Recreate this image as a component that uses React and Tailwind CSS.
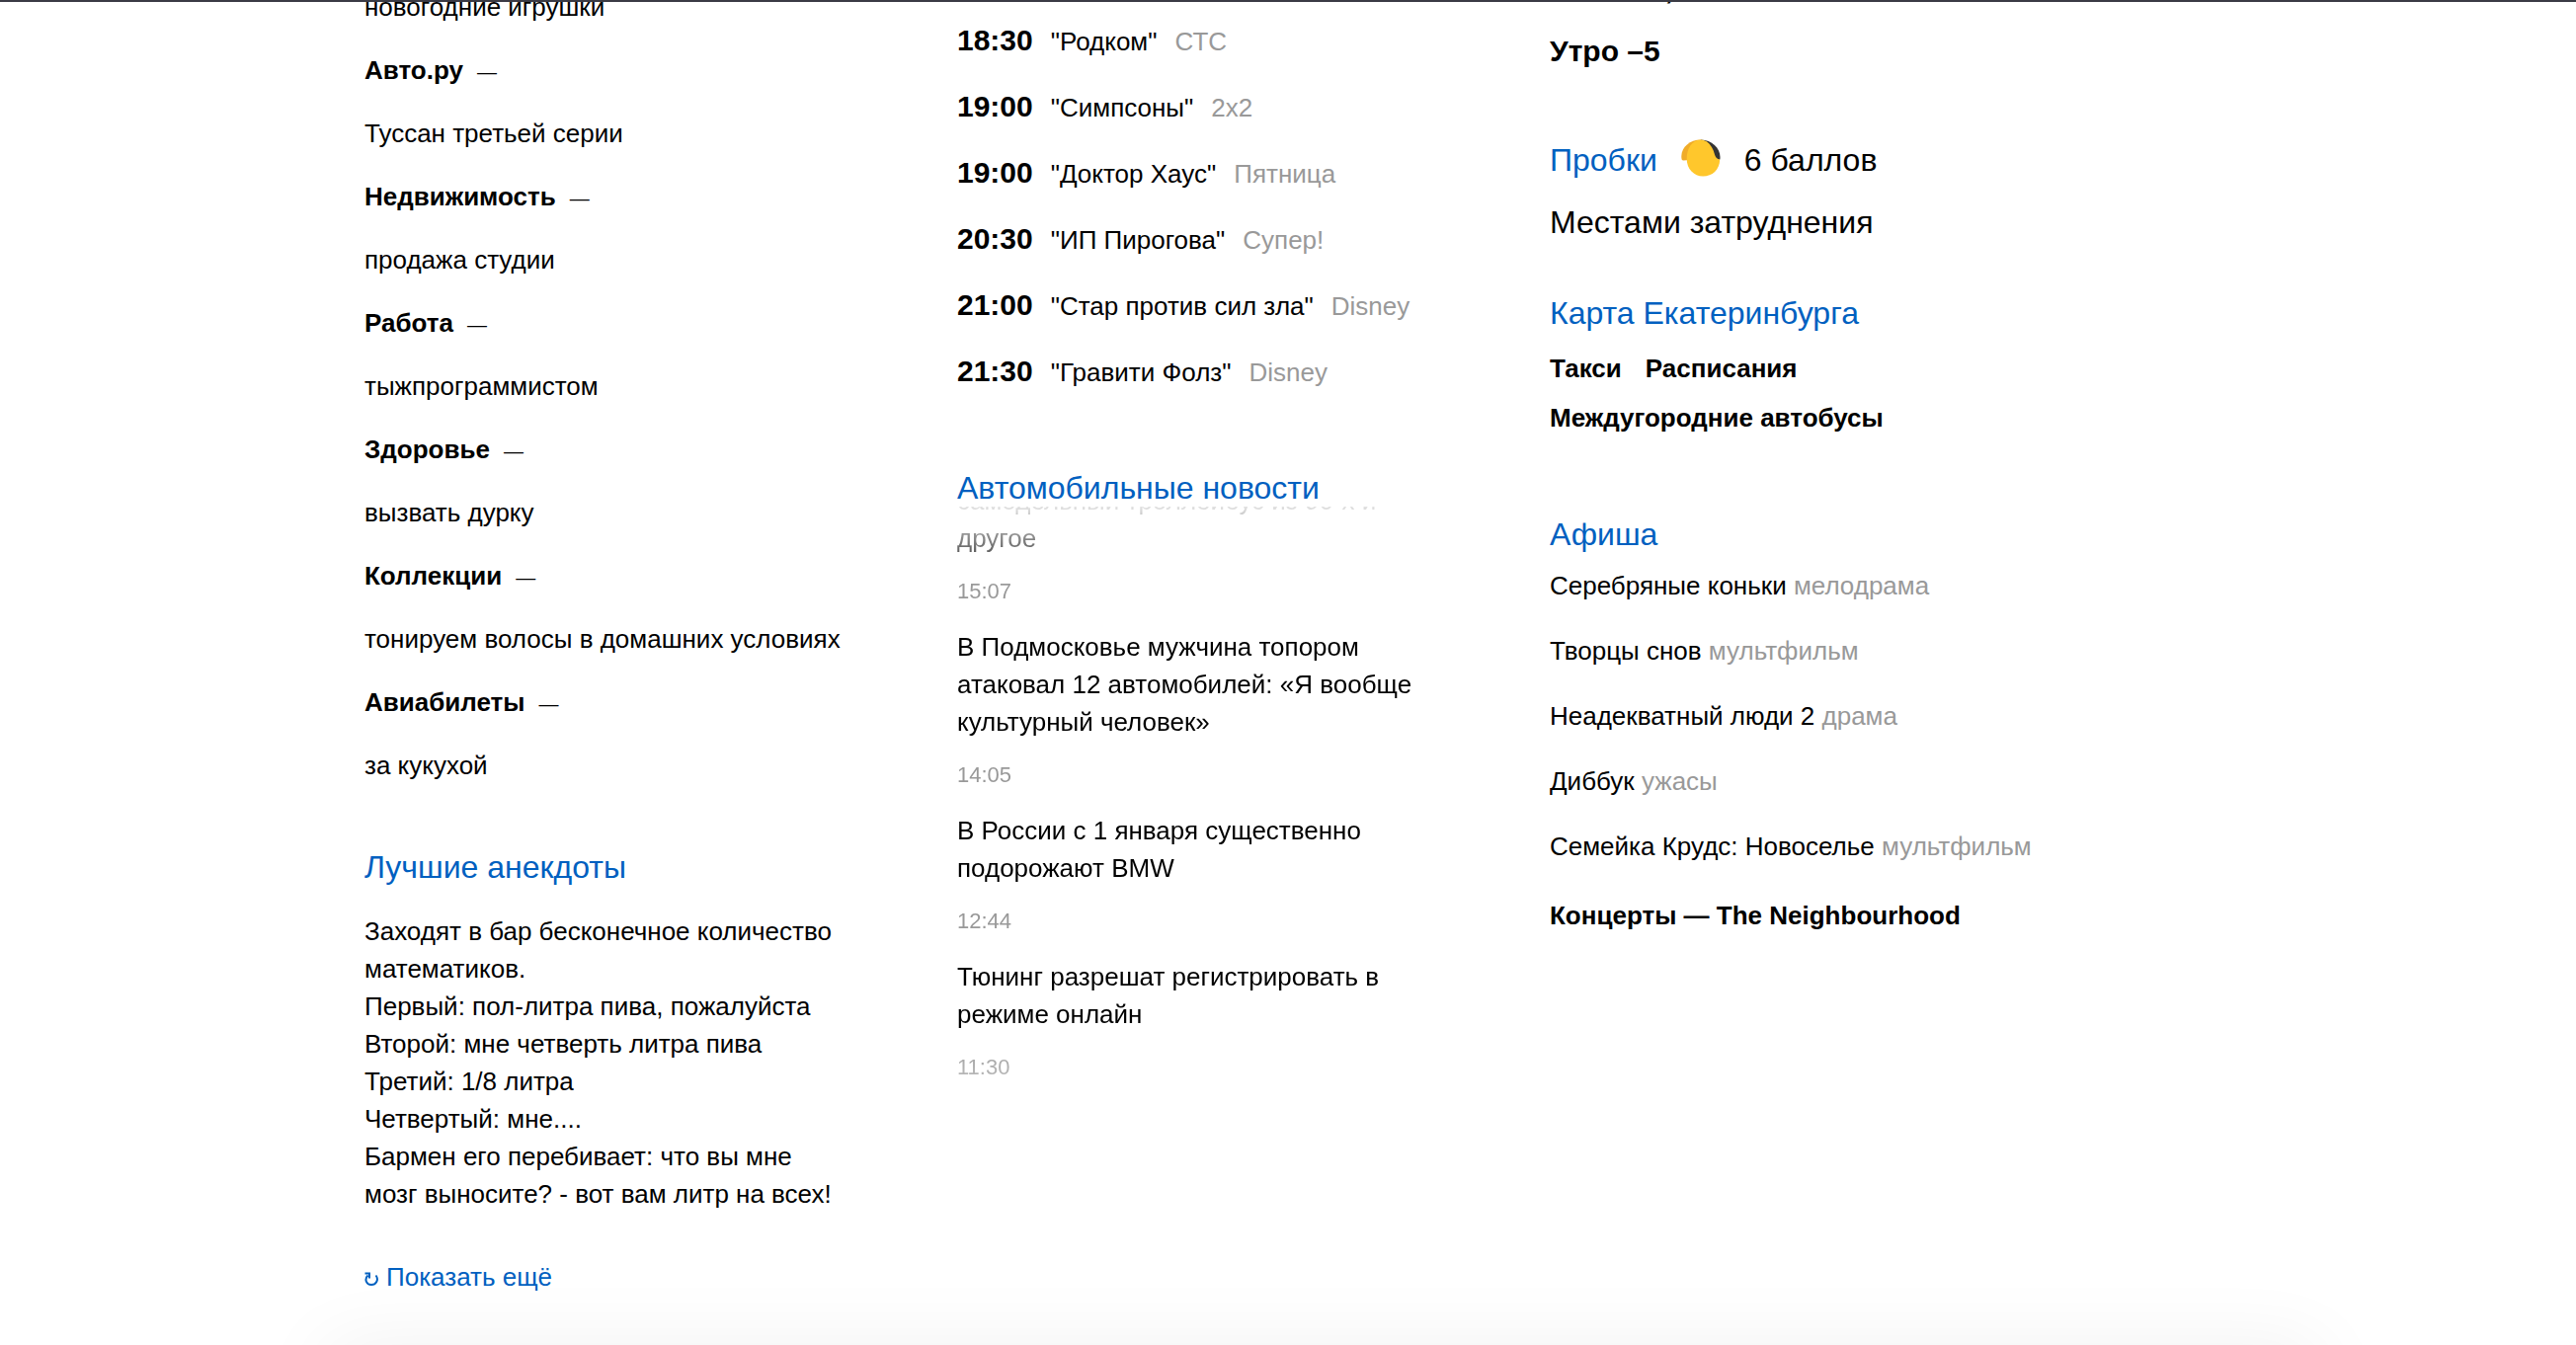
const services = [
  { text: "новогодние игрушки" },
  { name: "Авто.ру", text: "Туссан третьей серии" },
  { name: "Недвижимость", text: "продажа студии" },
  { name: "Работа", text: "тыжпрограммистом" },
  { name: "Здоровье", text: "вызвать дурку" },
  { name: "Коллекции", text: "тонируем волосы в домашних условиях" },
  { name: "Авиабилеты", text: "за кукухой" },
];

const joke = [
  "Заходят в бар бесконечное количество математиков.",
  "Первый: пол-литра пива, пожалуйста",
  "Второй: мне четверть литра пива",
  "Третий: 1/8 литра",
  "Четвертый: мне....",
  "Бармен его перебивает: что вы мне мозг выносите? - вот вам литр на всех!",
];

const programs = [
  ["18:30", '"Родком"', "СТС"],
  ["19:00", '"Симпсоны"', "2x2"],
  ["19:00", '"Доктор Хаус"', "Пятница"],
  ["20:30", '"ИП Пирогова"', "Супер!"],
  ["21:00", '"Стар против сил зла"', "Disney"],
  ["21:30", '"Гравити Фолз"', "Disney"],
];

const news = [
  ["самодельный троллейбус из 90-х и другое", "15:07"],
  ["В Подмосковье мужчина топором атаковал 12 автомобилей: «Я вообще культурный человек»", "14:05"],
  ["В России с 1 января существенно подорожают BMW", "12:44"],
  ["Тюнинг разрешат регистрировать в режиме онлайн", "11:30"],
];

const films = [
  ["Серебряные коньки", "мелодрама"],
  ["Творцы снов", "мультфильм"],
  ["Неадекватный люди 2", "драма"],
  ["Диббук", "ужасы"],
  ["Семейка Крудс: Новоселье", "мультфильм"],
];

function Heading({ children }) {
  return (
    <h2 className="text-[32px] leading-[38px] text-[#0060c0]">
      <a href="#">{children}</a>
    </h2>
  );
}

function TrafficIcon() {
  return (
    <svg viewBox="0 0 40 38" className="h-[38px] w-10" aria-hidden="true">
      <path d="M20 0.5C9 0.5 0.3 8 0.3 17C0.3 20 0.5 21.500 2.500 21.500L8 21L22 8Z" fill="#f0ac28" />
      <path d="M20 0.5C31 0.5 39.5 9 39.5 18C39.500 20 39.400 21 38.500 21L34 19L20 4Z" fill="#343434" />
      <path d="M20 0.6C26 1 29.500 5 32 10C34.500 15 34 20 39.200 20.500C39 31 31.500 37.500 22.200 37.500C13 37.500 5.700 30 5.700 20C5.700 10 10.500 1 20 0.6Z" fill="#ffc72c" />
    </svg>
  );
}

function ServicesColumn() {
  return (
    <div className="-mt-3">
      <dl className="flex flex-col gap-[26px]">
        {services.map((s) => (
          <div key={s.text} className="flex flex-col gap-[26px]">
            {s.name && (
              <dt>
                <a href="#" className="mr-3.5 font-bold">{s.name}</a>
                <span className="text-[20px] leading-none">—</span>
              </dt>
            )}
            <dd>{s.text}</dd>
          </div>
        ))}
      </dl>
      <section className="mt-[65px]">
        <Heading>Лучшие анекдоты</Heading>
        <div className="mt-[27px] max-w-[490px]">
          {joke.map((line) => (
            <p key={line}>{line}</p>
          ))}
        </div>
        <button type="button" className="mt-[46px] flex items-baseline gap-2 text-[#0060c0]">
          <svg viewBox="0 0 14 14" className="h-3.5 w-3.5" fill="none" stroke="currentColor" strokeWidth="2" aria-hidden="true">
            <path d="M11.500 3.500C15 8 11.500 13 7 13C2 13 -0.500 7.500 3.500 3.500" />
            <path d="M0.500 1.500H5V6.500" />
          </svg>
          Показать ещё
        </button>
      </section>
    </div>
  );
}

function TvColumn() {
  return (
    <div className="pt-[21px]">
      <ul className="flex flex-col gap-[27px]">
        {programs.map(([time, title, channel]) => (
          <li key={time + title} className="flex items-baseline gap-[18px] leading-[34px]">
            <time className="text-[30px] leading-[40px] font-bold">{time}</time>
            <a href="#">{title}</a>
            <span className="text-[#999]">{channel}</span>
          </li>
        ))}
      </ul>
      <section className="mt-[79px]">
        <Heading>Автомобильные новости</Heading>
        <div className="overflow-hidden [mask-image:linear-gradient(to_bottom,transparent_-10px,black_80px,black_540px,transparent_660px)]">
          <ul className="-mt-[25px] flex flex-col gap-[23px]">
            {news.map(([title, time]) => (
              <li key={time}>
                <a href="#" className="block">{title}</a>
                <time className="mt-[21px] block text-[22px] leading-[28px] text-[#999]">{time}</time>
              </li>
            ))}
          </ul>
        </div>
      </section>
    </div>
  );
}

function CityColumn() {
  return (
    <div className="-mt-[30px]">
      <div className="flex flex-col gap-[25px] text-[30px] font-bold">
        <p>Ночь –4,</p>
        <p>Утро –5</p>
      </div>
      <section className="mt-[72px]">
        <div className="flex">
          <Heading>Пробки</Heading>
          <span className="mx-6 -mt-0.5">
            <TrafficIcon />
          </span>
          <span className="text-[32px]">6 баллов</span>
        </div>
        <p className="mt-[25px] text-[32px]">Местами затруднения</p>
      </section>
      <section className="mt-[54px]">
        <Heading>Карта Екатеринбурга</Heading>
        <div className="mt-[18px] flex flex-wrap gap-x-6 gap-y-3 font-bold">
          <a href="#">Такси</a>
          <a href="#">Расписания</a>
          <a href="#" className="w-full">Междугородние автобусы</a>
        </div>
      </section>
      <section className="mt-20">
        <Heading>Афиша</Heading>
        <ul className="mt-3.5 flex flex-col gap-7">
          {films.map(([title, genre]) => (
            <li key={title}>
              <a href="#">{title}</a> <span className="text-[#999]">{genre}</span>
            </li>
          ))}
        </ul>
        <p className="mt-8 font-bold">
          <a href="#">Концерты — The Neighbourhood</a>
        </p>
      </section>
    </div>
  );
}

export default function App() {
  return (
    <div className="relative h-screen overflow-hidden bg-white font-['Liberation_Sans',Arial,sans-serif] text-[26px] leading-[38px] text-black">
      <div className="absolute inset-x-0 top-0 z-10 h-0.5 bg-[#3b3b45]" />
      <main className="mx-auto flow-root max-w-[1870px] pr-[170px]">
        <div className="grid grid-cols-3 gap-[100px]">
          <ServicesColumn />
          <TvColumn />
          <CityColumn />
        </div>
      </main>
      <div className="absolute top-full right-[260px] left-[330px] h-20 shadow-[0_0_80px_rgba(0,0,0,0.06)]" />
    </div>
  );
}
